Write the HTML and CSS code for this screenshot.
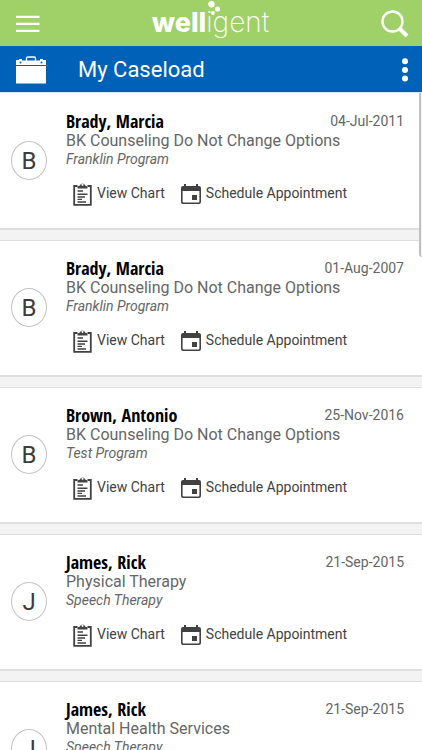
FILE: index.html
```html
<!DOCTYPE html>
<html lang="en">
<head>
<meta charset="utf-8">
<meta name="viewport" content="width=device-width, initial-scale=1">
<title>My Caseload</title>
<link rel="stylesheet" href="styles.css">
</head>
<body>
<svg class="sprite" aria-hidden="true">
  <symbol id="chart" viewBox="0 0 20 24">
    <path d="M5 4H1.7V22.8H18.3V4H15" fill="none" stroke="currentColor" stroke-width="1.8"/>
    <path fill-rule="evenodd" d="M5 6.5V4.6L7.4 3.4A2.7 2.7 0 0 1 12.6 3.4L15 4.6V6.5ZM10 1.7a1.1 1.1 0 1 0 0 2.2a1.1 1.1 0 1 0 0-2.2Z" fill="currentColor"/>
    <path d="M5 9H10.5M5 12.2H15M5 15H12.5M5 17.4H9.5M5 20H13.5" fill="none" stroke="currentColor" stroke-width="1.4"/>
  </symbol>
  <symbol id="calendar" viewBox="0 0 22 22">
    <path fill-rule="evenodd" d="M4 1H6V3H16V1H18V3H19Q21 3 21 5V19Q21 21 19 21H3Q1 21 1 19V5Q1 3 3 3H4ZM2.6 8V18.4Q2.6 19.4 3.6 19.4H18.4Q19.4 19.4 19.4 18.4V8Z" fill="currentColor"/>
    <path d="M12 12H17V17H12Z" fill="currentColor"/>
  </symbol>
</svg>
<header class="brand">
  <button class="icon-button" type="button" aria-label="Menu">
    <svg width="24" height="18" viewBox="0 0 24 18"><path d="M0 1.8H23.5M0 8.8H23.5M0 15.8H23.5" stroke="#fff" stroke-width="2.2"/></svg>
  </button>
  <div class="logo"><span class="logo-bold">well</span><span class="logo-thin">igent</span>
    <svg class="logo-dots" width="16" height="18" viewBox="0 0 16 18" fill="#fff"><circle cx="4.5" cy="4.3" r="3.2"/><circle cx="10.5" cy="9" r="2.6"/><circle cx="6" cy="13" r="1.9"/></svg>
  </div>
  <button class="icon-button" type="button" aria-label="Search">
    <svg width="28" height="28" viewBox="0 0 28 28" fill="none" stroke="#fff"><circle cx="11.5" cy="11.5" r="10" stroke-width="2.4"/><path d="M18.5 18.5L26 26" stroke-width="4"/></svg>
  </button>
</header>
<div class="title-bar">
  <svg width="30" height="28" viewBox="0 0 30 28"><path d="M10.5 5V2.5Q10.5 1 12 1H18Q19.5 1 19.5 2.5V5" fill="none" stroke="#fff" stroke-width="1.3"/><path d="M0 9V4H3V3H6V4.5H24V3H27V4H30V9Z" fill="#fff"/><path d="M0 10H30V27.5H0Z" fill="#fff"/><circle cx="4.5" cy="6.4" r="1" fill="#0061b9"/><circle cx="25.5" cy="6.4" r="1" fill="#0061b9"/></svg>
  <h1>My Caseload</h1>
  <button class="icon-button" type="button" aria-label="More options">
    <svg width="6" height="24" viewBox="0 0 6 24" fill="#fff"><circle cx="3" cy="3.3" r="3"/><circle cx="3" cy="11.9" r="3"/><circle cx="3" cy="20.5" r="3"/></svg>
  </button>
</div>
<main class="caseload">
  <article class="card">
    <div class="avatar">B</div>
    <div class="details">
      <div class="heading"><h2>Brady, Marcia</h2><time>04-Jul-2011</time></div>
      <p class="service">BK Counseling Do Not Change Options</p>
      <p class="program">Franklin Program</p>
      <div class="actions"><a href="#"><svg class="chart-icon"><use href="#chart"/></svg>View Chart</a><a href="#"><svg class="calendar-icon"><use href="#calendar"/></svg>Schedule Appointment</a></div>
    </div>
  </article>
  <article class="card">
    <div class="avatar">B</div>
    <div class="details">
      <div class="heading"><h2>Brady, Marcia</h2><time>01-Aug-2007</time></div>
      <p class="service">BK Counseling Do Not Change Options</p>
      <p class="program">Franklin Program</p>
      <div class="actions"><a href="#"><svg class="chart-icon"><use href="#chart"/></svg>View Chart</a><a href="#"><svg class="calendar-icon"><use href="#calendar"/></svg>Schedule Appointment</a></div>
    </div>
  </article>
  <article class="card">
    <div class="avatar">B</div>
    <div class="details">
      <div class="heading"><h2>Brown, Antonio</h2><time>25-Nov-2016</time></div>
      <p class="service">BK Counseling Do Not Change Options</p>
      <p class="program">Test Program</p>
      <div class="actions"><a href="#"><svg class="chart-icon"><use href="#chart"/></svg>View Chart</a><a href="#"><svg class="calendar-icon"><use href="#calendar"/></svg>Schedule Appointment</a></div>
    </div>
  </article>
  <article class="card">
    <div class="avatar">J</div>
    <div class="details">
      <div class="heading"><h2>James, Rick</h2><time>21-Sep-2015</time></div>
      <p class="service">Physical Therapy</p>
      <p class="program">Speech Therapy</p>
      <div class="actions"><a href="#"><svg class="chart-icon"><use href="#chart"/></svg>View Chart</a><a href="#"><svg class="calendar-icon"><use href="#calendar"/></svg>Schedule Appointment</a></div>
    </div>
  </article>
  <article class="card">
    <div class="avatar">J</div>
    <div class="details">
      <div class="heading"><h2>James, Rick</h2><time>21-Sep-2015</time></div>
      <p class="service">Mental Health Services</p>
      <p class="program">Speech Therapy</p>
      <div class="actions"><a href="#"><svg class="chart-icon"><use href="#chart"/></svg>View Chart</a><a href="#"><svg class="calendar-icon"><use href="#calendar"/></svg>Schedule Appointment</a></div>
    </div>
  </article>
  <div class="edge-panel"></div>
</main>
</body>
</html>
```
FILE: styles.css
```css
* { box-sizing: border-box; }
body {
  margin: 0;
  height: 100vh;
  display: flex;
  flex-direction: column;
  overflow: hidden;
  font-family: Roboto, "Liberation Sans", sans-serif;
  background: #f3f3f3;
}
h1, h2, p { margin: 0; }
svg { display: block; flex: none; }
.sprite { position: absolute; width: 0; height: 0; }
.icon-button { padding: 0; border: 0; background: none; cursor: pointer; }
.brand {
  flex: none;
  height: 46px;
  padding: 2px 13px 0 16px;
  display: flex;
  align-items: center;
  justify-content: space-between;
  background: #a0d068;
}
.logo {
  position: relative;
  color: #fff;
  line-height: 44px;
  white-space: nowrap;
  font-family: Inter, sans-serif;
}
.logo-bold { font-size: 27px; font-weight: 800; }
.logo-thin { font-size: 28px; font-weight: 200; }
.logo-dots { position: absolute; left: 55px; top: 0; }
.title-bar {
  flex: none;
  height: 46px;
  padding: 2px 14px 0 16px;
  display: flex;
  align-items: center;
  background: #0061b9;
  border-bottom: 1px solid #20559a;
}
.title-bar h1 {
  flex: 1;
  margin-left: 32px;
  color: #fff;
  font-size: 22px;
  line-height: 28px;
  font-weight: 400;
}
.caseload {
  position: relative;
  flex: 1;
  min-height: 0;
  overflow: hidden;
  border-top: 1px solid #dce7f7;
  display: flex;
  flex-direction: column;
  gap: 10px;
}
.card {
  flex: none;
  display: flex;
  align-items: center;
  gap: 19px;
  padding: 16px 18px 22px 11px;
  background: #fff;
  border-bottom: 2px solid #dedede;
  border-top: 1px solid #dedede;
}
.card:first-child { border-top-color: #fff; }
.avatar {
  flex: none;
  width: 36px;
  height: 39px;
  margin-top: 4px;
  border: 1px solid #c4c4c4;
  border-radius: 50%;
  color: #3c3c3c;
  font-size: 24px;
  line-height: 38px;
  text-align: center;
}
.details { flex: 1; min-width: 0; color: #666; }
.heading { display: flex; align-items: center; justify-content: space-between; }
.heading h2 {
  color: #000;
  font-family: "Open Sans Condensed", "Noto Sans Condensed", "Roboto Condensed", "Liberation Sans Narrow", sans-serif;
  font-size: 18px;
  line-height: 22px;
  font-weight: 700;
}
.heading time { font-size: 14px; line-height: 22px; }
.service { font-size: 16px; line-height: 18px; }
.program { font-size: 14px; line-height: 18px; font-style: italic; }
.actions { display: flex; gap: 15px; padding: 14px 0 0 6px; }
.actions a {
  display: flex;
  gap: 4px;
  color: #424242;
  font-size: 14px;
  line-height: 22px;
  text-decoration: none;
}
.chart-icon { width: 21px; height: 24px; }
.calendar-icon { width: 22px; height: 24px; }
.edge-panel {
  position: absolute;
  right: 0;
  top: 0;
  width: 3px;
  height: 164px;
  background: #f3f3f3;
  border-left: 2px solid #c0c0c0;
  border-bottom: 1px solid #c0c0c0;
  border-bottom-left-radius: 6px;
}
```
